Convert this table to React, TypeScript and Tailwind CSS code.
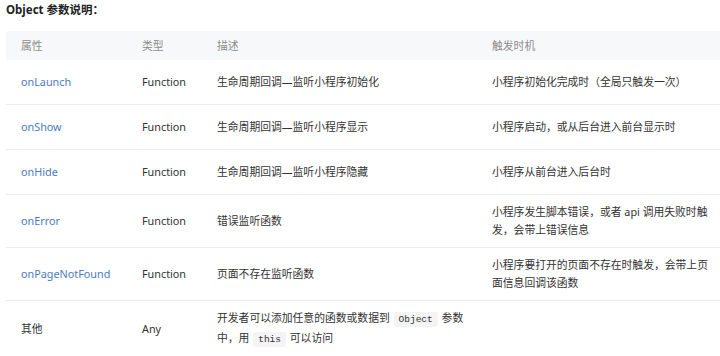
const rows: {
  name: string;
  link: boolean;
  type: string;
  desc: React.ReactNode;
  when: React.ReactNode;
}[] = [
  {
    name: 'onLaunch',
    link: true,
    type: 'Function',
    desc: '生命周期回调—监听小程序初始化',
    when: '小程序初始化完成时（全局只触发一次）',
  },
  {
    name: 'onShow',
    link: true,
    type: 'Function',
    desc: '生命周期回调—监听小程序显示',
    when: '小程序启动，或从后台进入前台显示时',
  },
  {
    name: 'onHide',
    link: true,
    type: 'Function',
    desc: '生命周期回调—监听小程序隐藏',
    when: '小程序从前台进入后台时',
  },
  {
    name: 'onError',
    link: true,
    type: 'Function',
    desc: '错误监听函数',
    when: (
      <>
        <span className="block">小程序发生脚本错误，或者 api 调用失败时触</span>
        <span className="block">发，会带上错误信息</span>
      </>
    ),
  },
  {
    name: 'onPageNotFound',
    link: true,
    type: 'Function',
    desc: '页面不存在监听函数',
    when: (
      <>
        <span className="block">小程序要打开的页面不存在时触发，会带上页</span>
        <span className="block">面信息回调该函数</span>
      </>
    ),
  },
  {
    name: '其他',
    link: false,
    type: 'Any',
    desc: (
      <>
        <span className="block">
          开发者可以添加任意的函数或数据到 <Code>Object</Code> 参数
        </span>
        <span className="block">
          中，用 <Code>this</Code> 可以访问
        </span>
      </>
    ),
    when: '',
  },
];

function Code({ children }: { children: React.ReactNode }) {
  return (
    <code className="mx-[1px] rounded-[2px] bg-[#f4f4f4] px-[5px] py-[2px] font-['Liberation_Mono',monospace] text-[9.5px] text-[#333]">
      {children}
    </code>
  );
}

export default function App() {
  return (
    <div className="h-[356px] w-[720px] overflow-hidden bg-white font-['Noto_Sans','Noto_Sans_CJK_SC',sans-serif] text-[10.8px] leading-[18px] text-[#333]">
      <h3 className="ml-[6px] pt-[1px] text-[11.5px] leading-[18px] font-bold text-[#222]">
        Object 参数说明：
      </h3>

      <div className="ml-[6px] mt-[12px]">
        <div className="grid h-[29px] grid-cols-[121px_75px_275px_1fr] items-center bg-[#f7f8fa] text-[#8c8c8c]">
          <div className="pl-[15px]">属性</div>
          <div className="pl-[15px]">类型</div>
          <div className="pl-[15px]">描述</div>
          <div className="pl-[15px]">触发时机</div>
        </div>

        {rows.map((row) => (
          <div
            key={row.name}
            className="grid min-h-[45px] grid-cols-[121px_75px_275px_1fr] items-center border-b border-[#ececec] py-[8px]"
          >
            <div className={row.link ? 'pl-[15px] text-[#4a7cc0]' : 'pl-[15px]'}>
              {row.name}
            </div>
            <div className="pl-[15px]">{row.type}</div>
            <div className="pl-[15px]">{row.desc}</div>
            <div className="pl-[15px] whitespace-nowrap">{row.when}</div>
          </div>
        ))}
      </div>
    </div>
  );
}
